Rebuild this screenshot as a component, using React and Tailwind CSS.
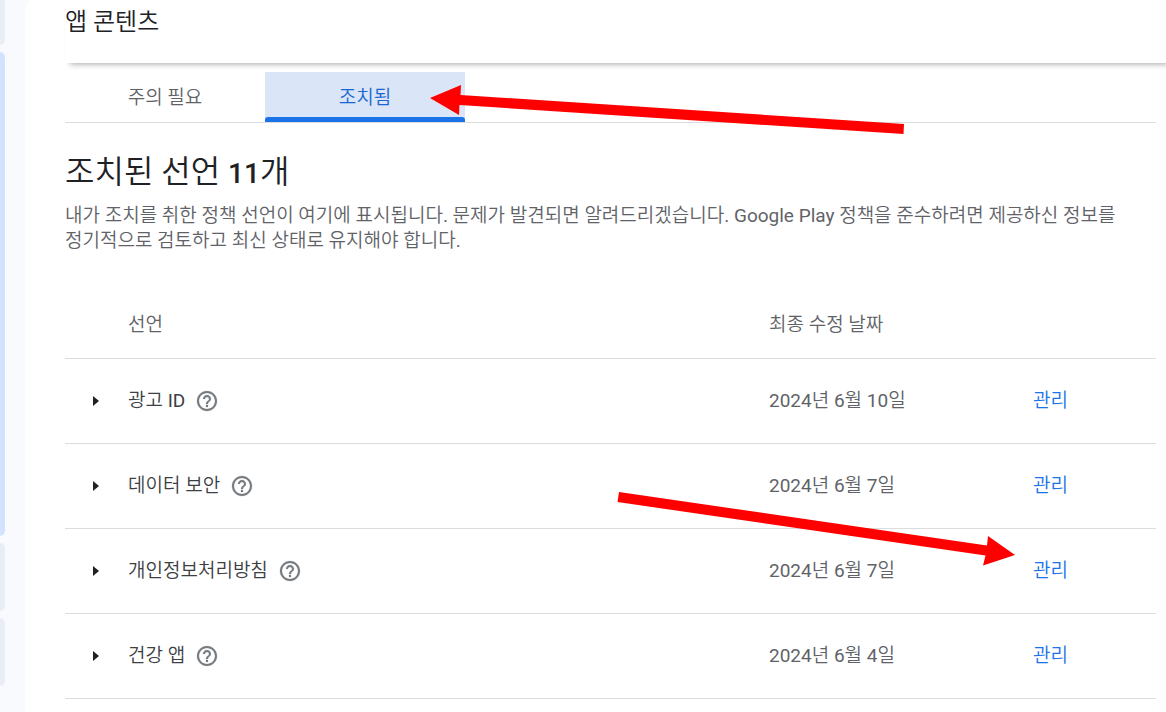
import React, { useState } from 'react';

const declarations = [
  { id: 'ad-id', name: '광고 ID', date: '2024년 6월 10일' },
  { id: 'data-safety', name: '데이터 보안', date: '2024년 6월 7일' },
  { id: 'privacy-policy', name: '개인정보처리방침', date: '2024년 6월 7일' },
  { id: 'health-apps', name: '건강 앱', date: '2024년 6월 4일' },
];

const tabs = [
  { id: 'attention', label: '주의 필요' },
  { id: 'actioned', label: '조치됨' },
];

const HelpIcon = () => (
  <svg className="size-6" viewBox="0 0 24 24" fill="#757b80" stroke="#757b80" strokeWidth="0.2" aria-hidden="true">
    <path d="M11 18h2v-2h-2v2zm1-16C6.48 2 2 6.48 2 12s4.48 10 10 10 10-4.48 10-10S17.52 2 12 2zm0 18c-4.41 0-8-3.59-8-8s3.59-8 8-8 8 3.59 8 8-3.59 8-8 8zm0-14c-2.21 0-4 1.79-4 4h2c0-1.1.9-2 2-2s2 .9 2 2c0 2-3 1.75-3 5h2c0-2.25 3-2.5 3-5 0-2.21-1.79-4-4-4z" />
  </svg>
);

const Sidebar = () => (
  <aside className="w-[25px] shrink-0 flex flex-col gap-[7px]">
    <div className="w-[5px] h-[45px] rounded-br-lg bg-[#e9eef6]" />
    <div className="w-[5px] h-[484px] rounded-r-lg bg-[#d3e3fd]" />
    <div className="w-[5px] h-[68px] rounded-r-lg bg-[#e9eef6]" />
    <div className="w-[5px] h-[68px] rounded-r-lg bg-[#e9eef6]" />
  </aside>
);

// Red arrows that point at the tab and at the manage link
const Arrows = () => (
  <svg
    className="absolute left-0 top-0 pointer-events-none"
    width="1166"
    height="712"
    viewBox="0 0 1166 712"
    fill="#ff0000"
    aria-hidden="true"
  >
    <polygon points="430,98 461,85 460.5,95 904,124 903.5,134 459.5,105 459,115" />
    <polygon points="619,492 987,545.5 988,536 1015,555 983,565.5 985.5,555.5 617.5,502" />
  </svg>
);

const DeclarationRow = ({ item }) => (
  <tr className="h-[85px] border-b border-[#dadce0]">
    <td className="pl-7">
      <button className="flex size-6 items-center" aria-label={`${item.name} 펼치기`}>
        <svg className="h-[10px] w-[6px]" viewBox="0 0 6 10" fill="#202124">
          <path d="M0 0l6 5-6 5z" />
        </svg>
      </button>
    </td>
    <td className="text-[#3c4043]">
      <div className="flex items-center gap-[10px]">
        <span>{item.name}</span>
        <button aria-label="도움말">
          <HelpIcon />
        </button>
      </div>
    </td>
    <td className="text-[#5f6368]">{item.date}</td>
    <td>
      <a href={`#${item.id}`} className="text-[#1a73e8]">관리</a>
    </td>
  </tr>
);

const App = () => {
  const [activeTab, setActiveTab] = useState('actioned');

  return (
    <div className="relative flex min-h-screen overflow-hidden bg-[#f8fafd] font-[Roboto,'Noto_Sans_CJK_KR_DemiLight','Noto_Sans_CJK_KR_Light','Noto_Sans_CJK_KR',sans-serif] text-[19px] leading-[25px] text-[#202124] break-keep">
      <Sidebar />
      <main className="-mt-1 min-w-0 flex-1 rounded-tl-2xl bg-white pl-10 pt-1">
        <header className="-mr-2 flex h-[63px] items-start pt-[6px] shadow-[0_6px_6px_-5px_rgba(0,0,0,0.35)]">
          <h1 className="text-2xl leading-8">앱 콘텐츠</h1>
        </header>

        <div className="pr-[10px]">
          <div className="mt-[9px] flex border-b border-[#dadce0]" role="tablist">
            {tabs.map((tab) => (
              <button
                key={tab.id}
                role="tab"
                aria-selected={activeTab === tab.id}
                onClick={() => setActiveTab(tab.id)}
                className={`relative h-[50px] w-[200px] ${
                  activeTab === tab.id ? 'bg-[#dae5f7] text-[#1967d2]' : 'text-[#5f6368]'
                }`}
              >
                {tab.label}
                {activeTab === tab.id && (
                  <span className="absolute inset-x-0 bottom-0 h-[5px] rounded-t-[3px] bg-[#1a73e8]" />
                )}
              </button>
            ))}
          </div>

          <h2 className="mt-[29px] text-[32px] leading-10">
            조치된 선언 <b className="text-[28px] leading-none font-medium">11</b>개
          </h2>
          <p className="mt-[11px] text-[#5f6368]">
            내가 조치를 취한 정책 선언이 여기에 표시됩니다. 문제가 발견되면 알려드리겠습니다. Google Play 정책을 준수하려면 제공하신 정보를 정기적으로 검토하고 최신 상태로 유지해야 합니다.
          </p>

          <table className="mt-[39px] w-full table-fixed border-collapse text-left">
            <thead>
              <tr className="h-[66px] border-b border-[#dadce0] text-[#5f6368]">
                <th className="w-[63px]" />
                <th className="font-normal">선언</th>
                <th className="w-[264px] font-normal">최종 수정 날짜</th>
                <th className="w-[123px]" />
              </tr>
            </thead>
            <tbody>
              {declarations.map((item) => (
                <DeclarationRow key={item.id} item={item} />
              ))}
            </tbody>
          </table>
        </div>
      </main>
      <Arrows />
    </div>
  );
};

export default App;
